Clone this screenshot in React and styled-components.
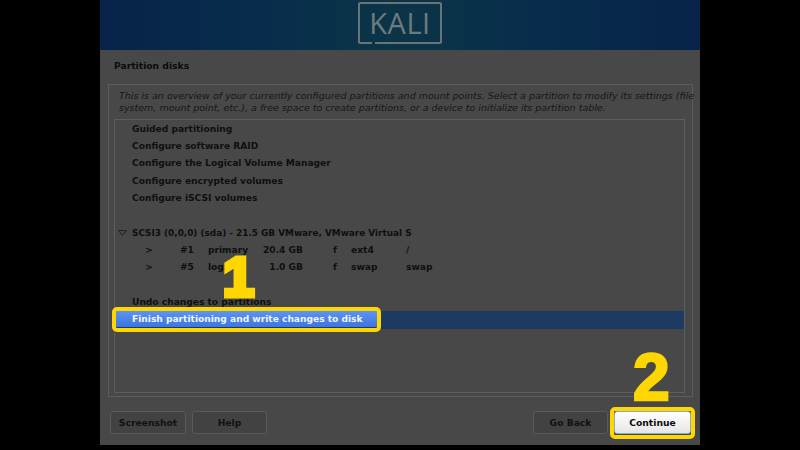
import React from "react"
import styled, { createGlobalStyle } from "styled-components"

const Global = createGlobalStyle`
  html, body { margin: 0; padding: 0; background: #000; }
  body { font-family: "DejaVu Sans", sans-serif; width: 800px; height: 450px; overflow: hidden; }
`;

const Page = styled.div`
  width: 800px;
  height: 450px;
  display: flex;
  justify-content: center;
  background: #000;
`;

const Installer = styled.div`
  position: relative;
  width: 600px;
  height: 445px;
  background: #484848;
  display: flex;
  flex-direction: column;
`;

const Banner = styled.div`
  height: 50px;
  flex: none;
  display: flex;
  justify-content: center;
  background: linear-gradient(90deg, #07234a 0%, #082c4c 25%, #0b3547 50%, #082c4c 75%, #07234a 100%);
`;

const Logo = styled.div`
  position: relative;
  width: 84px;
  height: 42px;
  margin-top: 2px;
  box-sizing: border-box;
  border: 2px solid #687478;
  border-radius: 2px;
  color: #6f7a7e;
  font-family: "Open Sans", sans-serif;
  font-size: 29px;
  letter-spacing: 0.5px;
  line-height: 38px;
  text-align: center;
`;

const LogoNotch = styled.span`
  position: absolute;
  left: 12px;
  bottom: -2px;
  width: 3px;
  height: 2px;
  background: #0b3344;
`;

const Title = styled.h1`
  margin: 0;
  padding: 9px 0 0 14px;
  height: 25px;
  font-size: 9.2px;
  line-height: 13px;
  font-weight: 700;
  color: #0c0c0c;
`;

const Frame = styled.div`
  margin: 0 7px 0 8px;
  height: 313px;
  box-sizing: border-box;
  border: 1px solid #5c5c5c;
  padding: 5px 7px 3px 5px;
  display: flex;
  flex-direction: column;
`;

const Description = styled.p`
  margin: 0 0 5px 5px;
  font-size: 9.5px;
  line-height: 12px;
  font-style: italic;
  color: #161616;
  height: 24px;
  white-space: nowrap;
`;

const List = styled.div`
  flex: 1;
  border: 1px solid #5e5e5e;
  padding-top: 0.6px;
`;

const Row = styled.div`
  height: 17.4px;
  line-height: 17.4px;
  padding-left: 17px;
  font-size: 9.1px;
  font-weight: 700;
  white-space: nowrap;
  color: ${p => (p.$selected ? "#d5dbe6" : "#0f0f0f")};
  background: ${p => (p.$selected ? "#1d3a63" : "transparent")};
`;

const DiskRow = styled(Row)`
  display: flex;
  align-items: center;
  padding-left: 3px;
  font-size: 8.9px;
`;

const Arrow = styled.svg`
  width: 9px;
  height: 6px;
  margin-right: 5px;
  flex: none;
`;

const PartRow = styled(Row)`
  display: grid;
  grid-template-columns: 35px 28px 50px 45px 48px 55px 40px;
  padding-left: 30px;
`;

const Cell = styled.span`
  text-align: ${p => (p.$right ? "right" : "left")};
  padding-left: ${p => p.$indent || 0}px;
`;

const Spacer = styled.div`
  height: ${p => p.$h}px;
`;

const Footer = styled.div`
  display: flex;
  justify-content: space-between;
  padding: 14px 9px 0 10px;
`;

const Group = styled.div`
  display: flex;
  gap: 6px;
`;

const Btn = styled.div`
  width: ${p => p.$w || 76}px;
  height: 23px;
  box-sizing: border-box;
  border: 1px solid #5a5a5a;
  border-radius: 3px;
  background: #424242;
  color: #111;
  font-size: 9.2px;
  font-weight: 700;
  line-height: 21px;
  text-align: center;
`;

const PrimaryBtn = styled(Btn)`
  background: linear-gradient(#ffffff, #e6e6e6);
  border-color: #8fa9c2;
  color: #0d0d0d;
`;

const Highlight = styled.div`
  position: absolute;
  box-sizing: border-box;
  border: 4px solid #fed600;
  border-radius: 5px;
  left: ${p => p.$x}px;
  top: ${p => p.$y}px;
  width: ${p => p.$w}px;
  height: ${p => p.$h}px;
`;

const ActiveRow = styled.div`
  position: absolute;
  left: 16px;
  top: 311px;
  width: 261px;
  height: 16px;
  background: linear-gradient(#5b94f5, #3d76dd);
  color: #f2f5fb;
  font-size: 9.1px;
  font-weight: 700;
  line-height: 16px;
  padding-left: 16px;
  box-sizing: border-box;
  white-space: nowrap;
`;

const Digit = styled.div`
  position: absolute;
  left: ${p => p.$x}px;
  top: ${p => p.$y}px;
  color: #fed600;
  font-family: "Liberation Sans", sans-serif;
  font-weight: 700;
  font-size: ${p => p.$size}px;
  line-height: ${p => p.$size}px;
  -webkit-text-stroke: ${p => p.$stroke}px #fed600;
`;

export default function App() {
  return (
    <Page>
      <Global />
      <Installer>
        <Banner>
          <Logo>
            KALI
            <LogoNotch />
          </Logo>
        </Banner>
        <Title>Partition disks</Title>
        <Frame>
          <Description>
            This is an overview of your currently configured partitions and mount points. Select a partition to modify its settings (file
            <br />
            system, mount point, etc.), a free space to create partitions, or a device to initialize its partition table.
          </Description>
          <List>
            <Row>Guided partitioning</Row>
            <Row>Configure software RAID</Row>
            <Row>Configure the Logical Volume Manager</Row>
            <Row>Configure encrypted volumes</Row>
            <Row>Configure iSCSI volumes</Row>
            <Spacer $h={17} />
            <DiskRow>
              <Arrow viewBox="0 0 9 6">
                <path d="M0.5 0.5h8L4.5 5.5z" fill="none" stroke="#222" strokeWidth="1" />
              </Arrow>
              SCSI3 (0,0,0) (sda) - 21.5 GB VMware, VMware Virtual S
            </DiskRow>
            <PartRow>
              <Cell>&gt;</Cell>
              <Cell>#1</Cell>
              <Cell>primary</Cell>
              <Cell $right>20.4 GB</Cell>
              <Cell $indent={30}>f</Cell>
              <Cell>ext4</Cell>
              <Cell>/</Cell>
            </PartRow>
            <PartRow>
              <Cell>&gt;</Cell>
              <Cell>#5</Cell>
              <Cell>logical</Cell>
              <Cell $right>1.0 GB</Cell>
              <Cell $indent={30}>f</Cell>
              <Cell>swap</Cell>
              <Cell>swap</Cell>
            </PartRow>
            <Spacer $h={17} />
            <Row>Undo changes to partitions</Row>
            <Row $selected>Finish partitioning and write changes to disk</Row>
          </List>
        </Frame>
        <Footer>
          <Group>
            <Btn $w={76}>Screenshot</Btn>
            <Btn $w={75}>Help</Btn>
          </Group>
          <Group>
            <Btn $w={75}>Go Back</Btn>
            <PrimaryBtn $w={77}>Continue</PrimaryBtn>
          </Group>
        </Footer>
        <ActiveRow>Finish partitioning and write changes to disk</ActiveRow>
        <Highlight $x={12} $y={307} $w={269} $h={25} />
        <Highlight $x={510} $y={407} $w={85} $h={32} />
        <Digit $x={123} $y={249} $size={56} $stroke={5}>1</Digit>
        <Digit $x={533} $y={344} $size={66} $stroke={2.5}>2</Digit>
      </Installer>
    </Page>
  )
}
